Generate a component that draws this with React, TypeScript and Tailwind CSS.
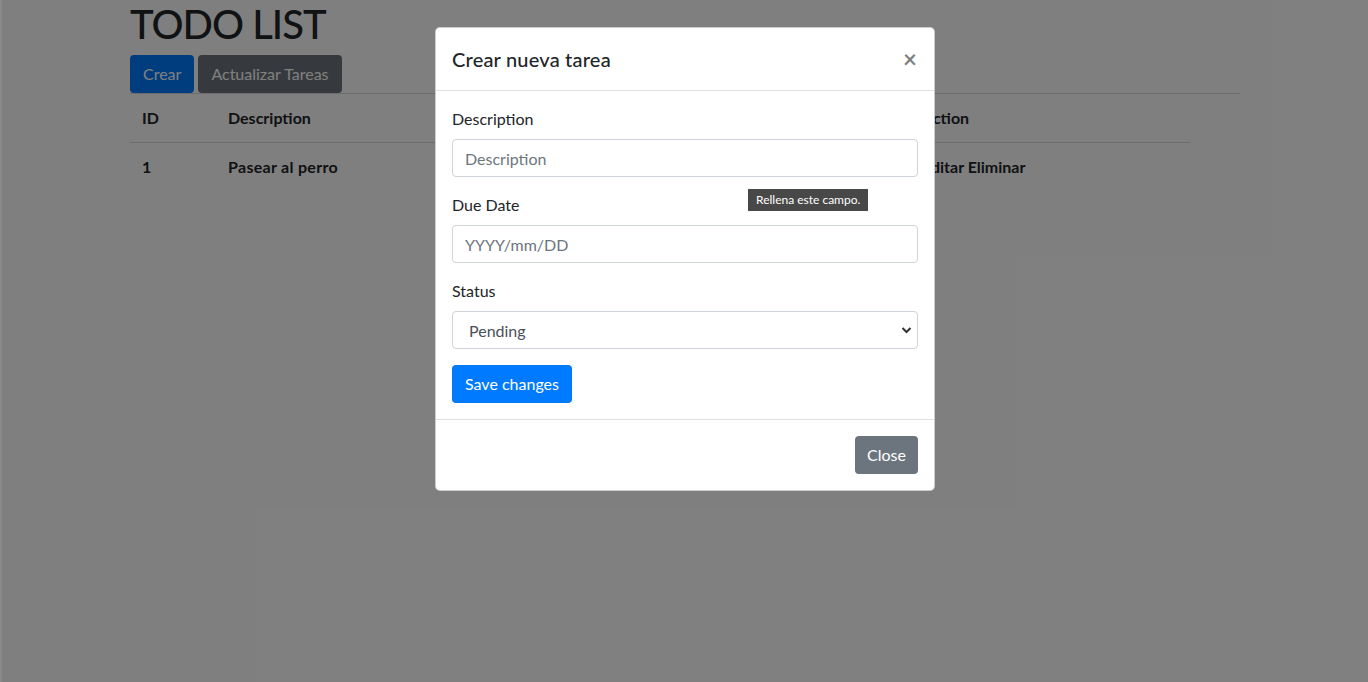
import { useState } from 'react';

const tasks = [{ id: 1, description: 'Pasear al perro', dueDate: '2023/05/20', status: 'Pending' }];

function Field({ label, children }: { label: string; children: React.ReactNode }) {
  return (
    <div className="mb-4">
      <label className="block mb-2 leading-6 text-[#212529]">{label}</label>
      {children}
    </div>
  );
}

export default function App() {
  const [status, setStatus] = useState('Pending');

  return (
    <div className="flex min-h-[682px] font-['Lato','Liberation_Sans',sans-serif] text-base">
      {/* left edge strip */}
      <div className="w-[2px] bg-[#8a8a8a] shrink-0" />

      <div className="relative flex-1 bg-white">
        <main className="w-[1140px] mx-auto px-[15px] text-[#212529]">
          <h1 className="text-[40px] font-medium leading-[48px] tracking-[-1px] mb-[7px]">TODO LIST</h1>

          <div className="flex gap-1 border-b border-[#dadada]">
            <button className="h-[38px] px-[13px] rounded bg-[#007bff] text-white">Crear</button>
            <button className="h-[38px] px-[13px] rounded bg-[#6c757d] text-white">Actualizar Tareas</button>
          </div>

          <table className="w-[1060px] text-left table-fixed">
            <thead>
              <tr className="border-b border-[#dadada]">
                <th className="w-[86px] p-3 leading-6 font-bold">ID</th>
                <th className="w-[300px] p-3 font-bold">Description</th>
                <th className="w-[200px] p-3 font-bold">Due Date</th>
                <th className="w-[194px] p-3 font-bold">Status</th>
                <th className="p-3 font-bold">Action</th>
              </tr>
            </thead>
            <tbody>
              {tasks.map((t) => (
                <tr key={t.id}>
                  <th className="p-3 leading-6 font-bold">{t.id}</th>
                  <th className="p-3 font-bold tracking-[0.3px]">{t.description}</th>
                  <th className="p-3 font-bold">{t.dueDate}</th>
                  <th className="p-3 font-bold">{t.status}</th>
                  <th className="p-3 font-bold">
                    <span>Editar</span> <span>Eliminar</span>
                  </th>
                </tr>
              ))}
            </tbody>
          </table>
        </main>

        {/* Backdrop */}
        <div className="absolute inset-0 bg-black/50" />

        {/* Modal */}
        <div className="absolute inset-0 flex justify-center items-start pt-[27px]">
          <div className="w-[500px] bg-white border border-black/20 rounded-[5px]">
            <div className="flex items-center justify-between px-4 py-4 border-b border-[#dee2e6]">
              <h5 className="text-xl font-medium leading-[30px] tracking-[0.2px] text-[#212529]">Crear nueva tarea</h5>
              <span className="text-2xl font-bold leading-none text-black/50 mr-[1px]">×</span>
            </div>

            <div className="p-4">
              <div className="relative">
                <Field label="Description">
                  <input
                    className="w-full h-[38px] px-3 border border-[#ced4da] rounded placeholder:text-[#6c757d] text-[#495057]"
                    placeholder="Description"
                  />
                </Field>
                <div className="absolute left-[296px] top-[82px] h-[22px] px-[8px] bg-[#484848] text-white text-[12px] leading-[22px] whitespace-nowrap">
                  Rellena este campo.
                </div>
              </div>

              <Field label="Due Date">
                <input
                  className="w-full h-[38px] px-3 border border-[#ced4da] rounded placeholder:text-[#6c757d] text-[#495057]"
                  placeholder="YYYY/mm/DD"
                />
              </Field>

              <Field label="Status">
                <div className="relative">
                  <select
                    value={status}
                    onChange={(e) => setStatus(e.target.value)}
                    className="w-full h-[38px] pl-4 pr-8 pt-[1px] border border-[#ced4da] rounded bg-white text-[#495057] appearance-none"
                  >
                    <option>Pending</option>
                    <option>In progress</option>
                    <option>Done</option>
                  </select>
                  <svg
                    className="absolute right-[6px] top-[15px] pointer-events-none"
                    width="11"
                    height="8"
                    viewBox="0 0 11 8"
                  >
                    <path d="M1.5 2 L5.5 6 L9.5 2" fill="none" stroke="#333" strokeWidth="2" />
                  </svg>
                </div>
              </Field>

              <button className="h-[38px] px-[13px] rounded bg-[#007bff] text-white">Save changes</button>
            </div>

            <div className="flex justify-end px-3 py-3 border-t border-[#dee2e6]">
              <button className="m-1 h-[38px] px-3 rounded bg-[#6c757d] text-white">Close</button>
            </div>
          </div>
        </div>
      </div>
    </div>
  );
}
